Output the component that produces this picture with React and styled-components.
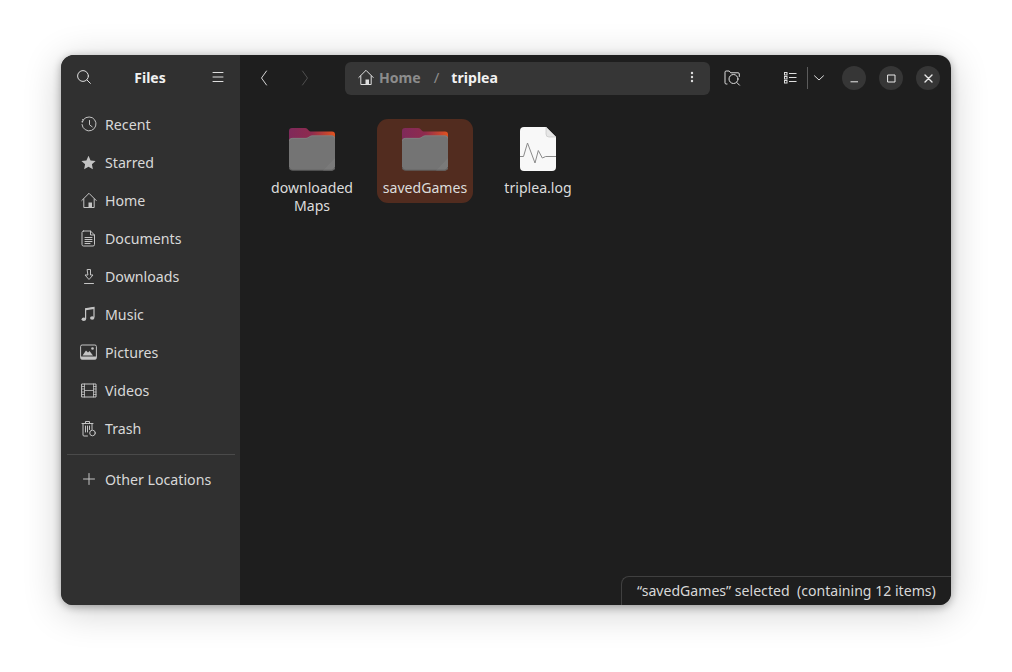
import React from "react";
import styled, { createGlobalStyle } from "styled-components";

const Global = createGlobalStyle`
  html, body { margin: 0; padding: 0; background: #fff; }
  body { font-family: "Noto Sans", "Open Sans", sans-serif; }
`;

const Desktop = styled.div`
  width: 1012px;
  height: 672px;
  padding: 55px 61px 67px;
  box-sizing: border-box;
  overflow: hidden;
`;

const Frame = styled.div`
  border-radius: 13px;
  width: 890px;
  height: 550px;
  box-shadow: 0 2px 8px rgba(0, 0, 0, 0.32), 0 6px 38px rgba(0, 0, 0, 0.2);
`;

const Window = styled.div`
  position: relative;
  display: flex;
  width: 890px;
  height: 550px;
  border-radius: 13px 13px 12px 12px;
  overflow: hidden;
  background: #1e1e1e;
  color: #e4e4e4;
`;

const Sidebar = styled.aside`
  width: 179px;
  flex: none;
  display: flex;
  flex-direction: column;
  background: #303030;
`;

const SideHeader = styled.header`
  height: 46px;
  flex: none;
  display: flex;
  align-items: center;
  justify-content: space-between;
  padding: 0 14px 2px 15px;
  box-sizing: border-box;
`;

const AppTitle = styled.h1`
  margin: 0 2px 0 0;
  font-size: 14px;
  font-weight: 700;
  color: #f0f0f0;
`;

const Places = styled.nav`
  display: flex;
  flex-direction: column;
  padding-top: 4px;
`;

const Place = styled.div`
  height: 38px;
  display: flex;
  align-items: center;
  gap: 8px;
  padding-left: 19px;
  font-size: 14.2px;
  color: #d8d8d8;
`;

const PlaceIcon = styled.span`
  width: 17px;
  height: 17px;
  display: flex;
  align-items: center;
  justify-content: center;
  color: #c4c4c4;
`;

const Divider = styled.hr`
  margin: 7px 5px 5px 6px;
  border: 0;
  border-top: 1px solid #4a4a4a;
`;

const Main = styled.main`
  flex: 1;
  min-width: 0;
  display: flex;
  flex-direction: column;
`;

const Toolbar = styled.div`
  height: 46px;
  flex: none;
  display: flex;
  align-items: center;
`;

const NavArrow = styled.span`
  width: 16px;
  height: 18px;
  display: flex;
  align-items: center;
  justify-content: center;
  margin-left: ${(p) => p.$gap}px;
  color: ${(p) => (p.$disabled ? "#4f4f4f" : "#d6d6d6")};
`;

const PathBar = styled.div`
  width: 365px;
  height: 33px;
  margin-left: 32px;
  box-sizing: border-box;
  display: flex;
  align-items: center;
  padding: 0 16px 2px 13px;
  background: #363636;
  border-radius: 6px;
  font-size: 14.1px;
`;

const Crumb = styled.span`
  font-weight: 700;
  color: ${(p) => (p.$current ? "#f2f2f2" : "#8c8c8c")};
  margin-left: ${(p) => p.$gap}px;
`;

const Slash = styled.span`
  color: #8c8c8c;
  margin-left: 13px;
  font-size: 15px;
`;

const ToolIcon = styled.span`
  display: flex;
  align-items: center;
  justify-content: center;
  width: ${(p) => (p.$box ? `${p.$box}px` : "auto")};
  margin-left: ${(p) => (p.$push ? "auto" : `${p.$gap || 0}px`)};
  color: #dedede;
`;

const ViewDivider = styled.span`
  width: 1px;
  height: 22px;
  margin-left: 10px;
  background: #5c5c5c;
`;

const WinButton = styled.button`
  width: 24px;
  height: 24px;
  margin-left: ${(p) => p.$gap}px;
  padding: 0;
  border: 0;
  border-radius: 50%;
  display: flex;
  align-items: center;
  justify-content: center;
  background: #363636;
  color: #e8e8e8;
`;

const Grid = styled.div`
  display: flex;
  align-items: flex-start;
  gap: 17px;
  padding: 18px 0 0 24px;
`;

const Item = styled.div`
  width: 96px;
  box-sizing: border-box;
  display: flex;
  flex-direction: column;
  align-items: center;
  padding: ${(p) => (p.$file ? "8px" : "9px")} 0 6px;
  min-height: 84px;
  border-radius: 11px;
  background: ${(p) => (p.$selected ? "#522c1f" : "transparent")};
`;

const ItemName = styled.span`
  margin-top: 8px;
  text-align: center;
  font-size: 14.1px;
  line-height: 18px;
  color: #dcdcdc;
`;

const StatusBar = styled.div`
  position: absolute;
  right: 0;
  bottom: 0;
  width: 330px;
  height: 29px;
  box-sizing: border-box;
  display: flex;
  align-items: center;
  padding: 0 0 2px 15px;
  white-space: pre;
  font-size: 14.1px;
  color: #d8d8d8;
  background: #1e1e1e;
  border-top: 1px solid #404040;
  border-left: 1px solid #404040;
  border-top-left-radius: 8px;
`;

const stroke = { fill: "none", stroke: "currentColor", strokeWidth: 1, strokeLinecap: "round", strokeLinejoin: "round" };

const Svg = ({ size = 16, children, w, h }) => (
  <svg width={w || size} height={h || size} viewBox={`0 0 ${w || size} ${h || size}`} {...stroke}>{children}</svg>
);

const SearchIcon = () => <Svg><circle cx="7" cy="7" r="5.4" /><path d="M11 11l3.400 3.400" /></Svg>;
const MenuIcon = () => <Svg w={12} h={12}><path d="M1 1.500h10M1 6h10M1 10.500h10" /></Svg>;
const BackIcon = () => <Svg w={10} h={16}><path d="M7.500 1L2.500 8l5 7" /></Svg>;
const ForwardIcon = () => <Svg w={10} h={16}><path d="M2.500 1l5 7-5 7" /></Svg>;

const HomeGlyph = () => (
  <Svg>
    <path d="M.8 8.500L8 1.300l7.200 7.200" />
    <path d="M2.800 7v8.500h8" />
    <path d="M13.200 7v8.500h-2.500" />
    <rect x="7.500" y="10.500" width="3.500" height="5" fill="currentColor" stroke="none" />
  </Svg>
);

const RecentIcon = () => (
  <Svg>
    <path d="M2.600 3.400A7 7 0 1 1 1 8.500" />
    <path d="M1.200 5.700l.3.100M1.800 3.800l.3.300" strokeWidth="1.500" />
    <path d="M8.500 4.500v4.300l2.700 2" />
  </Svg>
);

const StarIcon = () => (
  <svg width="15" height="15" viewBox="0 0 15 15"><path fill="currentColor" d="M7.500.8l2.100 4.600 5 .6-3.700 3.300 1 4.900-4.400-2.500-4.400 2.500 1-4.900L.4 6l5-.6z" /></svg>
);

const DocIcon = () => (
  <Svg w={15} h={17}>
    <path d="M2.500 1h7l4 4v9.500a1.500 1.500 0 0 1-1.500 1.500H2.500A1.500 1.500 0 0 1 1 14.500v-12A1.500 1.500 0 0 1 2.500 1z" />
    <path d="M9.500 1v4h4" />
    <path d="M4 7.500h7M4 9.500h7M4 11.500h7M4 13.500h5" />
  </Svg>
);

const DownloadIcon = () => (
  <Svg w={14} h={17}>
    <path d="M5.500 1.500h3V7H11l-4 4.500L3 7h2.500z" />
    <path d="M2.500 15.500h9" />
  </Svg>
);

const MusicIcon = () => (
  <svg width="15" height="16" viewBox="0 0 15 16">
    <path fill="none" stroke="currentColor" strokeWidth="1.200" d="M4.600 13V2.800l8.400-1.300v10" />
    <path fill="none" stroke="currentColor" strokeWidth="1.800" d="M4.600 3.400l8.400-1.300" />
    <ellipse cx="2.800" cy="13.200" rx="2.200" ry="1.700" fill="currentColor" />
    <ellipse cx="11.200" cy="12" rx="2.200" ry="1.700" fill="currentColor" />
  </svg>
);

const PictureIcon = () => (
  <svg width="17" height="16" viewBox="0 0 17 16">
    <rect x="0.600" y="1" width="15.800" height="14" rx="1.500" fill="none" stroke="currentColor" />
    <path fill="currentColor" d="M0.500 12.500h16V14a1.500 1.500 0 0 1-1.500 1.500H2A1.500 1.500 0 0 1 .5 14z" />
    <path fill="currentColor" d="M2.500 11.500L6 6.500l2 2 1.500-1.500 3.500 4.500z" />
    <circle cx="12.500" cy="4.500" r="1.300" fill="currentColor" />
  </svg>
);

const VideoIcon = () => (
  <Svg w={16} h={15}>
    <rect x="1" y="1" width="14" height="13" />
    <path d="M3.500 1v13M12.500 1v13M3.500 7.500h9M1 3.500h2.500M1 6h2.500M1 9h2.500M1 11.500h2.500M12.500 3.500H15M12.500 6H15M12.500 9H15M12.500 11.500H15" strokeWidth=".8" />
  </Svg>
);

const TrashIcon = () => (
  <Svg w={16} h={17}>
    <path d="M1 3.500h11M4.500 3.500V1.500h4v2" />
    <path d="M2 3.500V15a1 1 0 0 0 1 1h3.500M11 3.500v6" />
    <path d="M4.500 6v6M6.500 6v6M8.500 6v3.500" />
    <circle cx="11.500" cy="13" r="2.800" />
  </Svg>
);

const PlusIcon = () => <Svg w={12} h={12}><path d="M6 .5v11M.5 6h11" /></Svg>;
const KebabIcon = () => (
  <svg width="4" height="12" viewBox="0 0 4 12"><g fill="currentColor"><circle cx="2" cy="2" r="1.200" /><circle cx="2" cy="6" r="1.200" /><circle cx="2" cy="10" r="1.200" /></g></svg>
);

const FolderSearchIcon = () => (
  <Svg w={17} h={16}>
    <path d="M3 14H2.200A1.200 1.200 0 0 1 1 12.800V2.200A1.200 1.200 0 0 1 2.200 1h3l1.500 1.800h7.400A1.200 1.200 0 0 1 15.300 4v2.500" />
    <circle cx="9.500" cy="9" r="4.500" />
    <path d="M12.800 12.500l2.700 2.700" />
  </Svg>
);

const ListIcon = () => (
  <Svg w={13} h={12}>
    <g strokeLinecap="butt" strokeLinejoin="miter">
      <rect x="0.500" y="0.500" width="2.500" height="2.500" /><rect x="0.500" y="4.500" width="2.500" height="2.500" /><rect x="0.500" y="8.500" width="2.500" height="2.500" />
      <path d="M5 1.500h7.500M5 5.500h7.500M5 9.500h7.500" />
    </g>
  </Svg>
);

const ChevronIcon = () => <Svg w={10} h={6}><path d="M.5.800L5 5l4.500-4.200" /></Svg>;
const MinIcon = () => <Svg w={9} h={9}><path d="M.5 7.800h7.500" strokeLinecap="butt" /></Svg>;
const MaxIcon = () => <Svg w={9} h={9}><rect x="1" y="1" width="7" height="7" /></Svg>;
const CloseIcon = () => <Svg w={9} h={9}><path d="M1 1l7 7M8 1L1 8" strokeWidth="1.400" /></Svg>;

const FolderIcon = ({ id }) => (
  <svg width="46" height="43" viewBox="0 0 46 43">
    <defs>
      <linearGradient id={`back-${id}`} x1="0" x2="1" y1="0" y2="0">
        <stop offset="0" stopColor="#7f2a5a" />
        <stop offset="0.5" stopColor="#8f2b4e" />
        <stop offset="1" stopColor="#e2531f" />
      </linearGradient>
    </defs>
    <path fill={`url(#back-${id})`} d="M3 0h13c2 0 2.500 1 3.500 2.300.6.900 1.500 1.200 3 1.200H43a3 3 0 0 1 3 3v12H0V3a3 3 0 0 1 3-3z" />
    <path fill="#747474" d="M3 10h14c2.500 0 3.500-2.500 6-2.500h20a3 3 0 0 1 3 3V39a3.500 3.500 0 0 1-3.500 3.500h-39A3.500 3.500 0 0 1 0 39V13a3 3 0 0 1 3-3z" />
    <path fill="#7a7a7a" d="M46 30v9a3.500 3.500 0 0 1-3.500 3.500H34z" />
    <path fill="none" stroke="#888" strokeWidth=".6" d="M.4 13a3 3 0 0 1 3-2.700h13.700c2.500 0 3.500-2.500 6-2.500H43a2.700 2.700 0 0 1 2.700 2.700" />
    <path fill="none" stroke="#565656" strokeWidth=".7" d="M.3 39a3.300 3.300 0 0 0 3.300 3.200h38.800A3.300 3.300 0 0 0 45.700 39" />
  </svg>
);

const LogFileIcon = () => (
  <svg width="36" height="44" viewBox="0 0 36 44">
    <path fill="#f8f8f8" d="M4 0h22l10 10v30a4 4 0 0 1-4 4H4a4 4 0 0 1-4-4V4a4 4 0 0 1 4-4z" />
    <path fill="#e6e6e6" stroke="#bdbdbd" strokeWidth=".6" d="M26 0l10 10h-7a3 3 0 0 1-3-3z" />
    <path fill="none" stroke="#8a8a8a" strokeWidth="1" d="M0 29.500h3.500L7.500 16 15 36l3.300-12.500L22.300 31l3.400-1.500H36" />
  </svg>
);

const places = [
  ["Recent", <RecentIcon />],
  ["Starred", <StarIcon />],
  ["Home", <HomeGlyph />],
  ["Documents", <DocIcon />],
  ["Downloads", <DownloadIcon />],
  ["Music", <MusicIcon />],
  ["Pictures", <PictureIcon />],
  ["Videos", <VideoIcon />],
  ["Trash", <TrashIcon />],
];

export default function App() {
  return (
    <Desktop>
      <Global />
      <Frame>
        <Window>
          <Sidebar>
            <SideHeader>
              <ToolIcon $box={16}><SearchIcon /></ToolIcon>
              <AppTitle>Files</AppTitle>
              <ToolIcon $box={16}><MenuIcon /></ToolIcon>
            </SideHeader>
            <Places>
              {places.map(([name, icon]) => (
                <Place key={name}>
                  <PlaceIcon>{icon}</PlaceIcon>
                  {name}
                </Place>
              ))}
              <Divider />
              <Place>
                <PlaceIcon><PlusIcon /></PlaceIcon>
                Other Locations
              </Place>
            </Places>
          </Sidebar>
          <Main>
            <Toolbar>
              <NavArrow $gap={16}><BackIcon /></NavArrow>
              <NavArrow $gap={25} $disabled><ForwardIcon /></NavArrow>
              <PathBar>
                <ToolIcon><HomeGlyph /></ToolIcon>
                <Crumb $gap={5}>Home</Crumb>
                <Slash>/</Slash>
                <Crumb $gap={12} $current>triplea</Crumb>
                <ToolIcon $push><KebabIcon /></ToolIcon>
              </PathBar>
              <ToolIcon $gap={14}><FolderSearchIcon /></ToolIcon>
              <ToolIcon $gap={43}><ListIcon /></ToolIcon>
              <ViewDivider />
              <ToolIcon $gap={6}><ChevronIcon /></ToolIcon>
              <WinButton $gap={18}><MinIcon /></WinButton>
              <WinButton $gap={13}><MaxIcon /></WinButton>
              <WinButton $gap={13}><CloseIcon /></WinButton>
            </Toolbar>
            <Grid>
              <Item>
                <FolderIcon id="a" />
                <ItemName>downloaded Maps</ItemName>
              </Item>
              <Item $selected>
                <FolderIcon id="b" />
                <ItemName>savedGames</ItemName>
              </Item>
              <Item $file>
                <LogFileIcon />
                <ItemName>triplea.log</ItemName>
              </Item>
            </Grid>
          </Main>
          <StatusBar>“savedGames” selected  (containing 12 items)</StatusBar>
        </Window>
      </Frame>
    </Desktop>
  );
}
